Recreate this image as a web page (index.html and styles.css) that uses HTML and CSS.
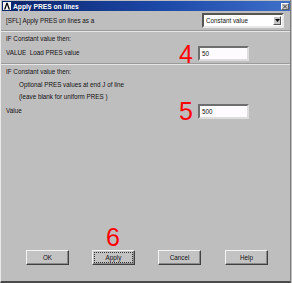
FILE: index.html
```html
<!DOCTYPE html>
<html lang="en">
<head>
  <meta charset="UTF-8" />
  <title>Apply PRES on lines</title>
  <link rel="stylesheet" href="styles.css">
</head>
<body>
  <div class="window">
    <div class="titlebar">
      <span class="app-icon">
        <svg width="8" height="8" viewBox="0 0 8 8">
          <rect x="0" y="0" width="8" height="8" fill="#f4f4f4"/>
          <polygon points="1,7.5 3.4,0.8 4.6,0.8 7,7.5 5.6,7.5 4,2.8 2.4,7.5" fill="#000"/>
        </svg>
      </span>
      <span class="title">Apply PRES on lines</span>
      <span class="close-btn">
        <svg width="6" height="5" viewBox="0 0 6 5">
          <path d="M1 0.5 L5 4.5 M5 0.5 L1 4.5" stroke="#404040" stroke-width="1"/>
        </svg>
      </span>
    </div>

    <div class="row row-top">
      <span class="label">[SFL] Apply PRES on lines as a</span>
      <div class="select">
        <span class="select-text">Constant value</span>
        <span class="select-arrow">
          <svg width="5" height="3" viewBox="0 0 5 3"><polygon points="0,0 5,0 2.5,3" fill="#000"/></svg>
        </span>
      </div>
    </div>

    <div class="sep"></div>

    <div class="row row-head"><span class="label">IF Constant value then:</span></div>
    <div class="row row-value">
      <span class="label">VALUE&nbsp; Load PRES value</span>
      <span class="step">4</span>
      <div class="input">50</div>
    </div>

    <div class="sep"></div>

    <div class="row row-head2"><span class="label">IF Constant value then:</span></div>
    <div class="row row-note"><span class="label indent">Optional PRES values at end J of line</span></div>
    <div class="row row-note2"><span class="label indent">(leave blank for uniform PRES )</span></div>
    <div class="row row-value2">
      <span class="label">Value</span>
      <span class="step">5</span>
      <div class="input">500</div>
    </div>

    <div class="buttons">
      <div class="btn">OK</div>
      <div class="btn btn-focus">
        <span class="step step-over">6</span>
        <span class="focus-ring">Apply</span>
      </div>
      <div class="btn">Cancel</div>
      <div class="btn btn-last">Help</div>
    </div>
  </div>
</body>
</html>
```

FILE: styles.css
```css
body { margin: 0; background: #bfbebf; font-family: "Liberation Sans", Arial, sans-serif; font-size: 6.3px; color: #111; }
.window { width: 289px; height: 281px; border-left: 1px solid #ebebeb; border-right: 1px solid #7c7c7c; border-bottom: 2px solid #4a4a4a; display: flex; flex-direction: column; background: #bfbebf; }

.titlebar { height: 10px; margin: 1px 0 0 1px; display: flex; align-items: center; background: linear-gradient(to right, #0a246a, #1c48a8 55%, #3d6fc8); color: #fff; }
.app-icon { width: 8px; height: 8px; margin-left: 1px; display: flex; }
.title { margin-left: 2px; font-weight: bold; font-size: 6.7px; flex: 1; }
.close-btn { width: 8px; height: 7px; margin-right: 1px; background: #c8c8c8; border: 1px solid; border-color: #fff #606060 #606060 #fff; box-sizing: border-box; display: flex; align-items: center; justify-content: center; }

.row { display: flex; align-items: center; padding-left: 5px; }
.label { flex: 1; white-space: nowrap; }
.indent { padding-left: 13px; }
.row-top { height: 19px; }
.row-head { height: 12px; }
.row-value { height: 19px; }
.row-head2 { height: 13px; }
.row-note { height: 12px; }
.row-note2 { height: 13px; }
.row-value2 { height: 16px; }
.row-value .label, .row-value2 .label { padding-bottom: 2px; }

.sep { height: 1px; border-top: 1px solid #9a9a9a; border-bottom: 1px solid #e6e6e6; height: 0; }

.select { width: 82px; height: 15px; margin-right: 6px; box-sizing: border-box; background: #fff; border: 2px solid; border-color: #555 #e8e8e8 #e8e8e8 #555; display: flex; align-items: center; }
.select-text { flex: 1; padding-left: 2px; }
.select-arrow { width: 8px; height: 9px; margin-right: 1px; background: #c4c4c4; border: 1px solid; border-color: #fff #555 #555 #fff; box-sizing: border-box; display: flex; align-items: center; justify-content: center; }

.step { color: #ff0000; font-size: 25px; line-height: 18px; width: 14px; margin-right: 5px; text-align: center; }
.input { width: 51px; height: 15px; margin-right: 41px; box-sizing: border-box; background: #fdfbfd; border: 2px solid; border-color: #6e6e6e #dcdcdc #dcdcdc #6e6e6e; padding-left: 2px; line-height: 11px; }

.buttons { margin-top: auto; margin-bottom: 16px; display: flex; padding-left: 25px; gap: 23px; }
.btn { position: relative; width: 43px; height: 15px; box-sizing: border-box; background: #c4c3c4; border: 1px solid; border-color: #f4f4f4 #404040 #404040 #f4f4f4; box-shadow: inset -1px -1px 0 #8a8a8a; display: flex; align-items: center; justify-content: center; }
.btn-last { margin-left: 1px; }
.focus-ring { display: flex; align-items: center; justify-content: center; width: 37px; height: 9px; border: 1px dotted #333; }
.step-over { position: absolute; left: 13px; top: -23px; margin: 0; }
```
